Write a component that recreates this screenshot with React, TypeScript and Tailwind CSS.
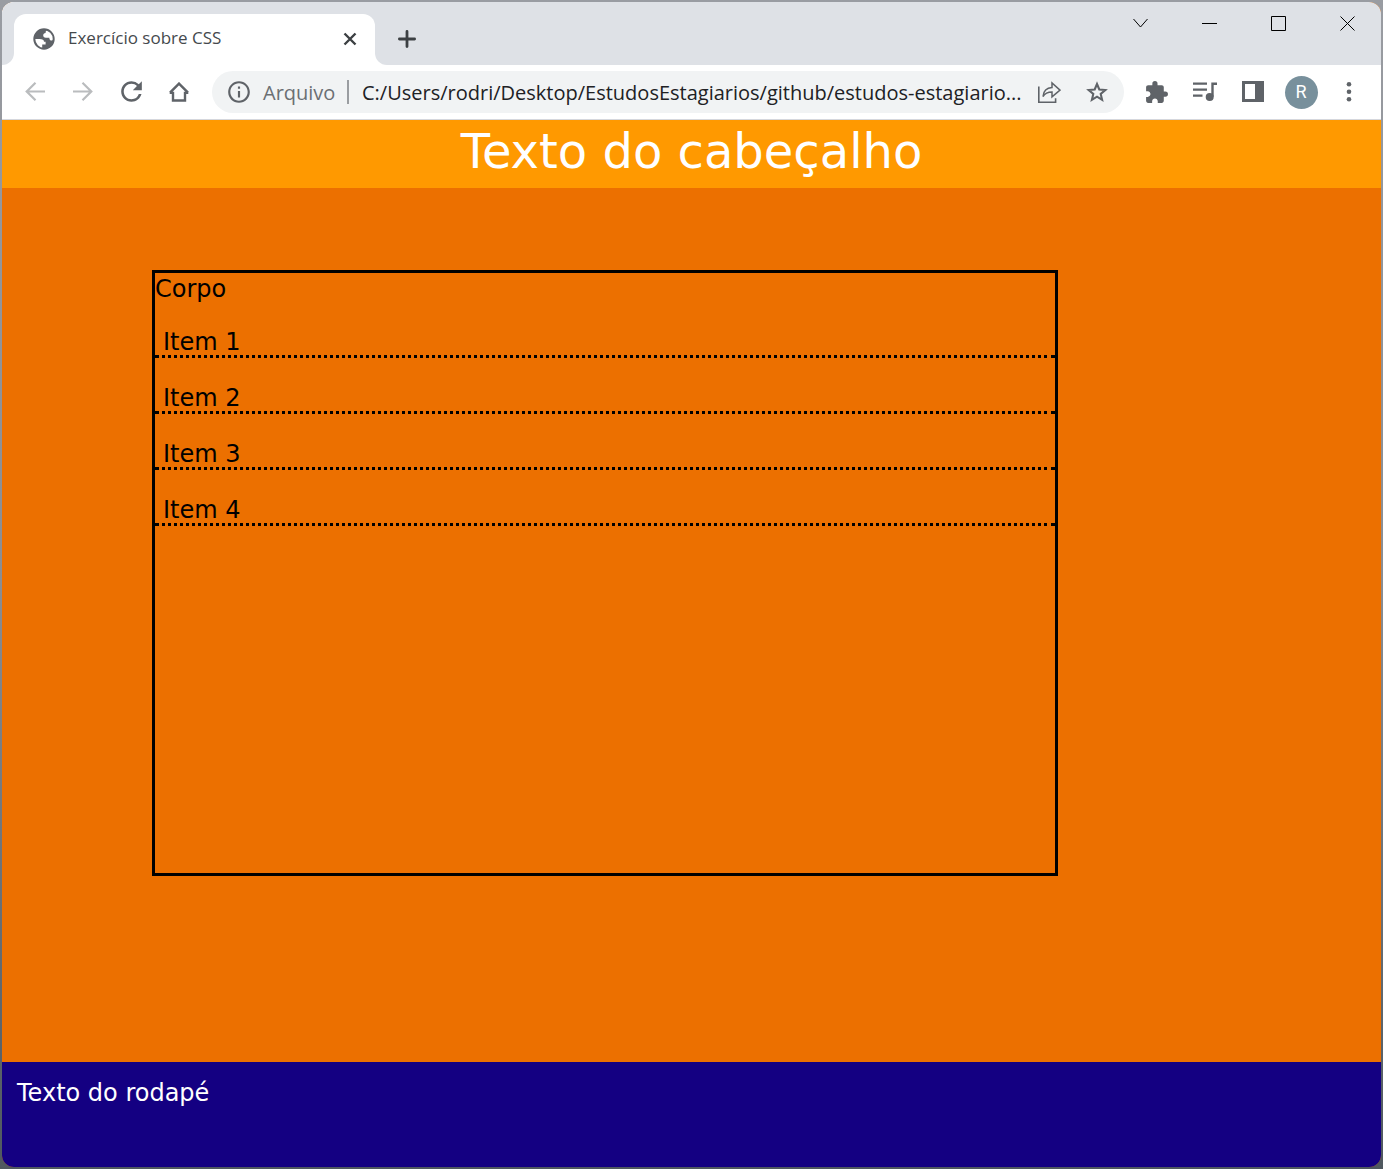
import type { ReactNode } from "react";
import { MdExtension, MdInfoOutline, MdRefresh } from "react-icons/md";

const items = ["Item 1", "Item 2", "Item 3", "Item 4"];

function ToolButton({ label, children, className = "text-[#5f6368]" }: { label: string; children: ReactNode; className?: string }) {
  return (
    <button type="button" aria-label={label} className={`flex h-[42px] w-12 shrink-0 items-center justify-center ${className}`}>
      {children}
    </button>
  );
}

function WindowButton({ label, children }: { label: string; children: ReactNode }) {
  return (
    <button type="button" aria-label={label} className="flex h-[43px] w-[69px] items-center justify-center pl-[2px] text-black">
      <svg width="15" height="15" viewBox="0 0 15 15" fill="none" stroke="currentColor" strokeWidth="1">
        {children}
      </svg>
    </button>
  );
}

function Globe() {
  return (
    <svg width="22" height="22" viewBox="0 0 22 22" className="shrink-0" aria-hidden="true">
      <circle cx="11" cy="11" r="9.7" fill="#fff" stroke="#5f6368" strokeWidth="2" />
      <path d="M11 1C5 1 1 5.5 1 11h5.5c3 0 4.500 1 4.500 2.800h1.600v2.700H9.200V20.300l1.800.7C16.5 21 21 16.500 21 11.500c-1.400 1.300-3 1.300-4 .4-.6-.6-.7-1.400-.7-2.100h-3.500c-1.700 0-2.600-1-2.600-2.500 0-1.400.8-2.400 2.400-2.400 0-1.700.6-2.500 1.800-3.100z" fill="#5f6368" />
    </svg>
  );
}

function TabStrip() {
  return (
    <div className="flex h-[63px] items-start justify-between bg-[#dee1e6]">
      <div className="flex h-full items-end">
        <div className="h-full w-3 overflow-hidden bg-white">
          <div className="h-full rounded-br-xl bg-[#dee1e6]" />
        </div>
        <div className="flex h-[51px] w-[361px] items-center rounded-t-xl bg-white pr-[13px] pb-[2px] pl-[19px]">
          <Globe />
          <span className="ml-[13px] flex-1 whitespace-nowrap font-['Open_Sans',sans-serif] text-[17px] text-[#45494d]">Exercício sobre CSS</span>
          <button type="button" aria-label="Fechar guia" className="flex h-6 w-6 items-center justify-center text-[#3c4043]">
            <svg width="14" height="14" viewBox="0 0 14 14" stroke="currentColor" strokeWidth="2.4">
              <path d="M1.500 1.500l11 11M12.500 1.500l-11 11" />
            </svg>
          </button>
        </div>
        <div className="h-full bg-white">
          <div className="flex h-full w-16 items-center justify-center rounded-bl-xl bg-[#dee1e6]">
            <button type="button" aria-label="Nova guia" className="mt-[10px] flex h-10 w-10 items-center justify-center text-[#3c4043]">
              <svg width="18" height="18" viewBox="0 0 18 18" stroke="currentColor" strokeWidth="2.800" strokeLinecap="round">
                <path d="M9 1.400v15.200M1.400 9h15.200" />
              </svg>
            </button>
          </div>
        </div>
      </div>
      <div className="flex">
        <WindowButton label="Pesquisar guias"><path d="M.5 3l7 8 7-8" /></WindowButton>
        <WindowButton label="Minimizar"><path d="M0 7.500h15" /></WindowButton>
        <WindowButton label="Maximizar"><path d="M.5.5h14v14H.5z" /></WindowButton>
        <WindowButton label="Fechar"><path d="M.5.5l14 14M14.500.5l-14 14" /></WindowButton>
      </div>
    </div>
  );
}

function Toolbar() {
  return (
    <div className="flex h-[55px] items-center gap-[9px] border-b border-[#d5d7dd] bg-white pr-2 pl-[9px]">
      <nav className="flex shrink-0">
        <ToolButton label="Voltar" className="text-[#babcbe]">
          <svg width="20" height="20" viewBox="0 0 20 20" fill="none" stroke="currentColor" strokeWidth="2.2">
            <path d="M20 9.500H2M10.500 .8L1.700 9.500l8.800 8.800" />
          </svg>
        </ToolButton>
        <ToolButton label="Avançar" className="text-[#babcbe]">
          <svg width="20" height="20" viewBox="0 0 20 20" fill="none" stroke="currentColor" strokeWidth="2.2">
            <path d="M0 9.500h18M9.500 .8l8.800 8.700-8.800 8.800" />
          </svg>
        </ToolButton>
        <ToolButton label="Atualizar"><MdRefresh size={31} className="mb-px" /></ToolButton>
        <ToolButton label="Página inicial">
          <svg width="20" height="20" viewBox="0 0 20 20" fill="none" stroke="currentColor" strokeWidth="2.4">
            <path d="M.7 10.900H4v7.600h12v-7.600h3.300M1 10.700l9-9.100 9 9.100" />
          </svg>
        </ToolButton>
      </nav>
      <div className="flex h-[42px] min-w-0 flex-1 items-center rounded-full bg-[#f1f3f4] pr-[3px] pl-[14px] font-['Open_Sans',sans-serif] text-xl">
        <MdInfoOutline size={26} className="shrink-0 text-[#5f6368]" />
        <label htmlFor="url" className="ml-[11px] w-[84px] shrink-0 pt-[2px] text-[#6b6f73]">Arquivo</label>
        <span className="h-6 w-[2px] shrink-0 bg-[#9a9da1]" />
        <input
          id="url"
          type="text"
          readOnly
          value="C:/Users/rodri/Desktop/EstudosEstagiarios/github/estudos-estagiario..."
          className="ml-[13px] h-[42px] min-w-0 flex-1 bg-transparent text-[#202124] outline-none"
        />
        <ToolButton label="Compartilhar">
          <svg width="24" height="24" viewBox="0 0 24 24" fill="none" stroke="currentColor" strokeWidth="1.600">
            <path d="M1.800 6.500v15.700h16.800v-4" />
            <path d="M6 16.500c.5-5.500 3.500-8.600 9-8.900V3l8 7.200-8 6.600v-4.700c-4.500 0-7 1.200-9 4.400z" strokeWidth="1.500" />
          </svg>
        </ToolButton>
        <ToolButton label="Favoritar">
          <svg width="22" height="22" viewBox="0 0 22 22" fill="none" stroke="currentColor" strokeWidth="2.1">
            <path d="M11 3l2.300 5.500 6 .5-4.600 3.900 1.400 5.900L11 15.700l-5.100 3.100 1.400-5.900L2.700 9l6-.5z" />
          </svg>
        </ToolButton>
      </div>
      <div className="flex shrink-0">
        <ToolButton label="Extensões"><MdExtension size={25} className="mr-px" /></ToolButton>
        <ToolButton label="Controles de mídia">
          <svg width="24" height="20" viewBox="0 0 24 20" fill="none" stroke="currentColor" strokeWidth="2.4" aria-hidden="true">
            <path d="M0 1.600h14M0 7.600h14M0 13.600h9.500M24 1.800h-4.500v13" />
            <circle cx="16.700" cy="15" r="2.800" fill="currentColor" />
          </svg>
        </ToolButton>
        <ToolButton label="Painel lateral">
          <svg width="22" height="22" viewBox="0 0 22 22" fill="currentColor">
            <path fillRule="evenodd" d="M0 0h22v21H0zM3 3v15h10V3z" />
          </svg>
        </ToolButton>
        <ToolButton label="Perfil" className="text-white">
          <span className="flex size-[33px] items-center justify-center rounded-full bg-[#78909c] font-['Roboto',sans-serif] text-lg">R</span>
        </ToolButton>
        <ToolButton label="Menu">
          <svg width="6" height="20" viewBox="0 0 6 20" fill="currentColor">
            <circle cx="3" cy="2.300" r="2.300" /><circle cx="3" cy="9.700" r="2.300" /><circle cx="3" cy="17.200" r="2.300" />
          </svg>
        </ToolButton>
      </div>
    </div>
  );
}

export default function App() {
  return (
    <div className="flex min-h-screen bg-linear-to-b from-[#999ca2] via-[#8b8d92] to-[#4f585f] p-[2px]">
      <div className="flex min-w-0 flex-1 flex-col overflow-hidden rounded-xl bg-[#ec7000] font-['Verdana','DejaVu_Sans',sans-serif] text-2xl text-black">
        <TabStrip />
        <Toolbar />
        <header className="bg-[#ff9900] pt-[2px] pb-2 text-center text-5xl leading-[58px] text-white">Texto do cabeçalho</header>
        <main className="flex-1 pt-[82px] pl-[150px]">
          <section className="h-[606px] w-[906px] max-w-full border-[3px] border-black">
            <p className="pt-[3px] leading-[26px]">Corpo</p>
            <ul>
              {items.map((item) => (
                <li key={item} className="mt-6 border-b-[3px] border-dotted border-black pt-1 pl-2 leading-[25px]">{item}</li>
              ))}
            </ul>
          </section>
        </main>
        <footer className="h-[105px] bg-[#140082] px-[15px] pt-[18px] leading-[27px] text-white">Texto do rodapé</footer>
      </div>
    </div>
  );
}
